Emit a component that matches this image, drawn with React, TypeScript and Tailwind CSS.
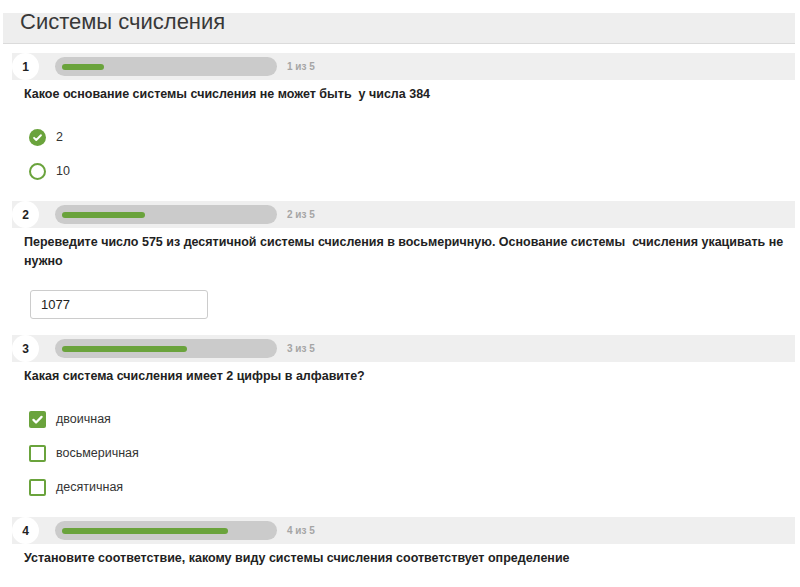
import React from 'react';

type Kind = 'radio' | 'checkbox';

interface Option {
  label: string;
  checked: boolean;
}

const GREEN = 'bg-[#6aa33c]';

const CheckMark = ({ big }: { big?: boolean }) => (
  <svg viewBox="0 0 16 16" className={big ? 'w-[13px] h-[13px]' : 'w-[11px] h-[11px]'} fill="none">
    <path d="M3 8.5l3.2 3.2L13 4.8" stroke="white" strokeWidth="2.8" strokeLinecap="round" strokeLinejoin="round" />
  </svg>
);

const Marker = ({ kind, checked }: { kind: Kind; checked: boolean }) => {
  const shape = kind === 'radio' ? 'rounded-full' : 'rounded-[2px]';
  if (checked) {
    return (
      <span className={`w-[17px] h-[17px] ${shape} ${GREEN} flex items-center justify-center shrink-0`}>
        <CheckMark big={kind === 'checkbox'} />
      </span>
    );
  }
  return <span className={`w-[17px] h-[17px] ${shape} border-2 border-[#6aa33c] bg-white shrink-0`} />;
};

const QuestionBar = ({ n, total }: { n: number; total: number }) => (
  <div className="flex items-center h-[27px] bg-[#efefef]">
    <div className="w-[27px] h-[27px] rounded-full bg-white flex items-center justify-center text-[12px] font-bold text-[#222]">
      {n}
    </div>
    <div className="ml-[16px] w-[222px] h-[19px] rounded-full bg-[#cbcbcb] px-[7px] flex items-center">
      <div className={`h-[6px] rounded-full ${GREEN}`} style={{ width: `${(n / total) * 208}px` }} />
    </div>
    <span className="ml-[10px] text-[10px] font-bold text-[#a5a5a5]">
      {n} из {total}
    </span>
  </div>
);

const QuestionText = ({ children }: { children: React.ReactNode }) => (
  <p className="mt-[5px] pl-[12px] pr-[6px] text-[12.5px] leading-[19px] font-bold text-[#222] whitespace-pre-wrap">{children}</p>
);

const Options = ({ kind, options }: { kind: Kind; options: Option[] }) => (
  <div className="mt-[16px] mb-[13px] pl-[17px]">
    {options.map((o) => (
      <div key={o.label} className="h-[34px] flex items-center">
        <Marker kind={kind} checked={o.checked} />
        <span className="ml-[10px] text-[12.5px] text-[#333]">{o.label}</span>
      </div>
    ))}
  </div>
);

export default function App() {
  return (
    <div className="min-h-screen bg-white pt-[13px] font-['Liberation_Sans',Arial,sans-serif] text-[#333]">
      {/* Header */}
      <div className="flex items-start ml-[3px] mr-[5px] h-[31px] bg-[#eeeeee] border-b border-[#dbdbdb] pl-[17px]">
        <h1 className="-mt-[2px] text-[22px] leading-[22px] text-[#383838]">Системы счисления</h1>
      </div>

      <div className="mt-[9px] pl-[12px] pr-[5px]">
        {/* Q1 */}
        <QuestionBar n={1} total={5} />
        <QuestionText>Какое основание системы счисления не может быть  у числа 384</QuestionText>
        <Options
          kind="radio"
          options={[
            { label: '2', checked: true },
            { label: '10', checked: false },
          ]}
        />

        {/* Q2 */}
        <QuestionBar n={2} total={5} />
        <QuestionText>
          Переведите число 575 из десятичной системы счисления в восьмеричную. Основание системы  счисления укацивать не нужно
        </QuestionText>
        <div className="mt-[19px] mb-[16px] ml-[18px] w-[178px] h-[29px] border border-[#cccccc] rounded-[3px] px-[10px] flex items-center text-[13px] text-[#222]">
          1077
        </div>

        {/* Q3 */}
        <QuestionBar n={3} total={5} />
        <QuestionText>Какая система счисления имеет 2 цифры в алфавите?</QuestionText>
        <Options
          kind="checkbox"
          options={[
            { label: 'двоичная', checked: true },
            { label: 'восьмеричная', checked: false },
            { label: 'десятичная', checked: false },
          ]}
        />

        {/* Q4 */}
        <QuestionBar n={4} total={5} />
        <QuestionText>Установите соответствие, какому виду системы счисления соответствует определение</QuestionText>
      </div>
    </div>
  );
}
